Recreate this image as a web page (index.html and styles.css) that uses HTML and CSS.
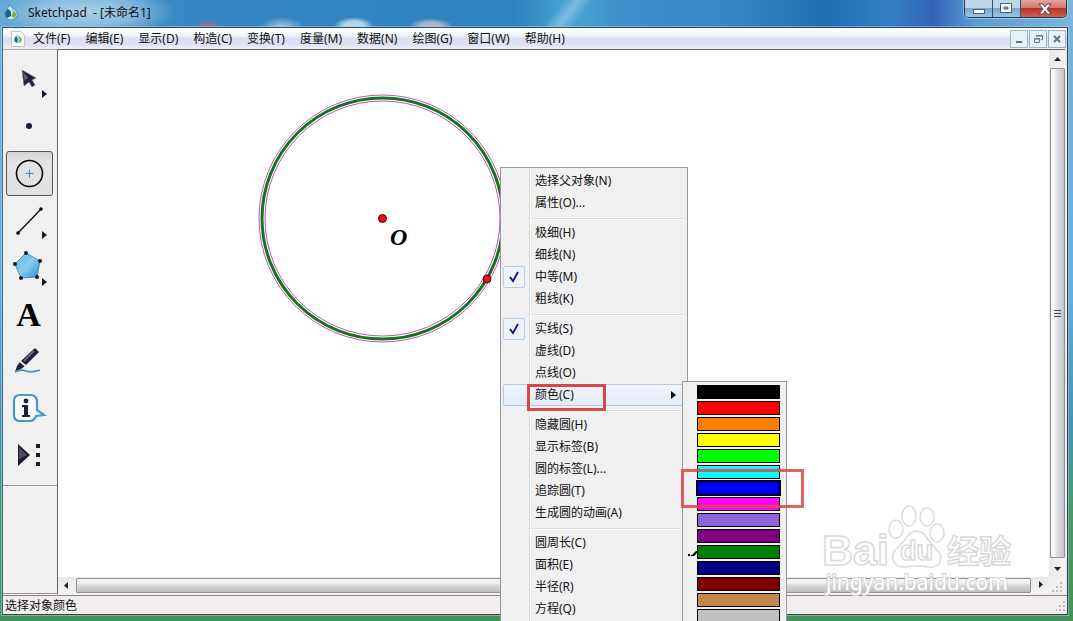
FILE: index.html
```html
<!DOCTYPE html>
<html lang="zh-CN">
<head>
<meta charset="utf-8">
<meta name="viewport" content="width=device-width, initial-scale=1">
<title>Sketchpad - [未命名1]</title>
<link rel="stylesheet" href="styles.css">
</head>
<body>
<div class="window">
  <header class="titlebar">
    <svg class="app-icon" width="16" height="18" viewBox="0 0 16 18" aria-hidden="true">
      <path d="M5 1L11 6Q15 9 12 14Q7 18 2 14Q-1 10 3 6Z" fill="#c6e8f3" stroke="#4d91ab"/>
      <path d="M4 5Q8 7 7 12L3 14Q-1 10 4 5Z" fill="#176687"/>
      <path d="M7 5L12 9Q13 12 10 14L7 12Q11 9 7 5Z" fill="#78b43c"/>
    </svg>
    <h1 class="title">Sketchpad &nbsp;- [未命名1]</h1>
    <div class="caption-buttons">
      <button class="caption" aria-label="最小化"><svg width="27" height="16" viewBox="0 0 27 16"><rect x="8.500" y="8.500" width="11" height="4" fill="#fff" stroke="#47607a"/></svg></button>
      <button class="caption" aria-label="最大化"><svg width="27" height="16" viewBox="0 0 27 16"><path d="M7.500 2.500h11v9h-11zM11 6v2h4V6z" fill="#fff" fill-rule="evenodd" stroke="#47607a"/></svg></button>
      <button class="caption caption-close" aria-label="关闭"><svg width="45" height="16" viewBox="0 0 45 16"><path d="M18 3h4l2 3 2-3h4l-4 5 4 5h-4l-2-3-2 3h-4l4-5z" fill="#fff" stroke="#5b4650"/></svg></button>
    </div>
  </header>

  <div class="frame">
    <nav class="menubar">
      <svg class="doc-icon" width="14" height="16" viewBox="0 0 14 16" aria-hidden="true">
        <path d="M.5.5h9l4 4v11H.5z" fill="#fff" stroke="#bcc5d3"/>
        <path d="M6 3Q11 6 11 9Q10 13 6 12Q2 11 3 8Z" fill="#b5ddeb"/>
        <path d="M5 5Q8 8 6 12Q1 10 5 5Z" fill="#1b6f88"/>
        <path d="M8 5Q13 9 8 12Q9 9 8 5Z" fill="#6da53c"/>
      </svg>
      <button>文件(F)</button><button>编辑(E)</button><button>显示(D)</button><button>构造(C)</button><button>变换(T)</button><button>度量(M)</button><button>数据(N)</button><button>绘图(G)</button><button>窗口(W)</button><button>帮助(H)</button>
      <div class="doc-buttons">
        <button aria-label="最小化文档"><svg width="16" height="16" viewBox="0 0 16 16"><path d="M5 11h6" stroke="#60758b" stroke-width="2"/></svg></button>
        <button aria-label="还原文档"><svg width="16" height="16" viewBox="0 0 16 16"><path d="M6.500 6V4.500h6v4H11M6 5h7M4.500 7.500h5v4h-5zM4 8h6" fill="none" stroke="#60758b"/></svg></button>
        <button aria-label="关闭文档"><svg width="16" height="16" viewBox="0 0 16 16"><path d="M5 5l6 6M11 5l-6 6" stroke="#60758b" stroke-width="2"/></svg></button>
      </div>
    </nav>

    <div class="workspace">
      <aside class="toolbar">
        <button class="tool" aria-label="移动箭头工具"><svg width="46" height="44" viewBox="1 1 46 44"><path d="M16 13L30 21L26 23L29 28L26 30L23 25L18 29Z" fill="#21203a" stroke="#777" stroke-width=".6"/><path d="M17 15l2 9 2-3 2 1z" fill="#65657c"/><path d="M36 33v8l5-4z" fill="#1b1930"/></svg></button>
        <button class="tool" aria-label="点工具"><svg width="46" height="44" viewBox="1 1 46 44"><circle cx="23" cy="22" r="3" fill="#1d1b35"/></svg></button>
        <button class="tool tool-active" aria-label="圆工具"><svg width="46" height="44" viewBox="1 0 46 44"><circle cx="23.500" cy="21.500" r="13" fill="none" stroke="#080808" stroke-width="1.600"/><path d="M23.500 17.500v8M19.500 21.500h8" stroke="#3c8fc4"/></svg></button>
        <button class="tool" aria-label="线段工具"><svg width="46" height="44" viewBox="1 1 46 44"><path d="M12 35L35 11" stroke="#1b1930" stroke-width="1.500"/><circle cx="12" cy="35" r="1.800"/><circle cx="35" cy="11" r="1.800"/><path d="M36 33v8l5-4z" fill="#1b1930"/></svg></button>
        <button class="tool" aria-label="多边形工具"><svg width="46" height="44" viewBox="1 1 46 44"><defs><linearGradient id="poly" x2="1" y2="1"><stop stop-color="#67b3df"/><stop offset=".5" stop-color="#8acbed"/><stop offset="1" stop-color="#2c91cc"/></linearGradient></defs><path d="M20 8L34 16L31 32L15 33L9 19Z" fill="url(#poly)" stroke="#3e91c1"/><g fill="#1b1930"><circle cx="20" cy="8" r="2"/><circle cx="34" cy="16" r="2"/><circle cx="31" cy="32" r="2"/><circle cx="15" cy="33" r="2"/><circle cx="9" cy="19" r="2"/><path d="M36 33v8l5-4z"/></g></svg></button>
        <button class="tool tool-text" aria-label="文本工具">A</button>
        <button class="tool" aria-label="标记工具"><svg width="46" height="44" viewBox="1 1 46 44"><path d="M29 9l4 4-13 13-5-4z" fill="#242239"/><path d="M28 12L18 22" stroke="#777587" stroke-width="1.500"/><path d="M14 23l5 4-4 3-6 3 2-6z" fill="#211f35"/><path d="M13 22l7 6" stroke="#eee"/><path d="M9 33Q15 30 20 32T34 31" fill="none" stroke="#4595c4" stroke-width="1.800"/></svg></button>
        <button class="tool" aria-label="信息工具"><svg width="46" height="44" viewBox="1 1 46 44"><path d="M14 9H24Q31 9 31 16V24L38 29L30 30Q28 35 24 35H14Q8 35 8 29V15Q8 9 14 9Z" fill="#f7fbfd" stroke="#4798c4" stroke-width="2.200"/><circle cx="20" cy="15" r="2.400" fill="#211e37"/><path d="M16 19h6v10h2v2h-8v-2h2v-8h-2z" fill="#211e37"/></svg></button>
        <button class="tool" aria-label="自定义工具"><svg width="46" height="44" viewBox="1 1 46 44"><path d="M12 11L24 22L12 33Z" fill="#1c1930"/><path d="M13 14l8 8-8 4z" fill="#4c495b"/><path d="M30 11h4v4h-4zM30 20h4v4h-4zM30 29h4v4h-4z" fill="#1c1930"/></svg></button>
        <hr>
      </aside>

      <main class="document">
        <svg class="sketch" role="img" aria-label="圆 O">
          <g fill="none">
            <circle cx="324.500" cy="168.500" r="120.500" stroke="#13761d" stroke-width="3"/>
            <circle cx="324.500" cy="168.500" r="123.500" stroke="#c64fc4"/>
            <circle cx="324.500" cy="168.500" r="117.500" stroke="#c64fc4"/>
          </g>
          <g fill="#e51220" stroke="#4b0909">
            <circle cx="324.500" cy="168.500" r="4"/>
            <circle cx="429" cy="229" r="4"/>
          </g>
          <text class="point-label" x="332" y="195">O</text>
        </svg>
        <div class="scroll scroll-y">
          <svg class="arrow" width="15" height="18" viewBox="0 0 15 18"><path d="M4 11h7L7.500 7z"/></svg>
          <div class="thumb"><svg width="7" height="9" viewBox="0 0 7 9"><path d="M0 1.500h7M0 4.500h7M0 7.500h7" stroke="#45494f"/></svg></div>
          <svg class="arrow" width="15" height="19" viewBox="0 0 15 19"><path d="M4 9h7l-3.500 4z"/></svg>
        </div>
        <div class="scroll scroll-x">
          <svg class="arrow" width="18" height="16" viewBox="0 0 18 16"><path d="M10 5v7L6 8.500z"/></svg>
          <div class="thumb"></div>
          <svg class="arrow" width="18" height="16" viewBox="0 0 18 16"><path d="M8 4v7l4-3.500z"/></svg>
        </div>
        <svg class="grip" width="15" height="16" viewBox="0 0 15 16"><path d="M11 5h2v2h-2zM7 9h2v2h-2zM11 9h2v2h-2zM3 13h2v2H3zM7 13h2v2H7zM11 13h2v2h-2z"/></svg>
      </main>
    </div>

    <footer class="status"><span>选择对象颜色</span>
      <svg class="grip" width="11" height="12" viewBox="4 4 11 12"><path d="M11 5h2v2h-2zM7 9h2v2h-2zM11 9h2v2h-2zM4 13h1v2H4zM7 13h2v2H7zM11 13h2v2h-2z"/></svg>
    </footer>
  </div>

  <svg class="watermark" width="200" height="100" viewBox="0 0 200 100" aria-label="Baidu 经验">
    <g fill="#fff" stroke="#dadada" stroke-width="1.500">
      <ellipse cx="74" cy="29" rx="7" ry="9"/><ellipse cx="87" cy="16" rx="7" ry="10"/><ellipse cx="105" cy="17" rx="7" ry="9"/><ellipse cx="115" cy="33" rx="7" ry="9"/>
      <path d="M94 31Q101 31 105 38Q109 44 114 49Q121 55 118 62Q115 68 107 67Q94 65 84 67Q74 68 71 60Q69 53 76 47Q81 43 85 37Q89 31 94 31Z"/>
      <text class="wm-brand" x="0" y="65">Bai</text>
      <text class="wm-du" x="78" y="60">du</text>
      <text class="wm-cjk" x="125" y="63">经验</text>
    </g>
    <text class="wm-url" x="4" y="90">jingyan.baidu.com</text>
  </svg>

  <div class="menu" role="menu">
    <button role="menuitem">选择父对象(N)</button>
    <button role="menuitem">属性(O)...</button>
    <hr>
    <button role="menuitem">极细(H)</button>
    <button role="menuitem">细线(N)</button>
    <button role="menuitemcheckbox" aria-checked="true"><svg class="check" width="20" height="20" viewBox="0 0 20 20"><path d="M6 10l3 4 5-9" fill="none" stroke="#12127c" stroke-width="1.800"/></svg>中等(M)</button>
    <button role="menuitem">粗线(K)</button>
    <hr>
    <button role="menuitemcheckbox" aria-checked="true"><svg class="check" width="20" height="20" viewBox="0 0 20 20"><path d="M6 10l3 4 5-9" fill="none" stroke="#12127c" stroke-width="1.800"/></svg>实线(S)</button>
    <button role="menuitem">虚线(D)</button>
    <button role="menuitem">点线(O)</button>
    <div class="submenu-owner">
      <button class="hot" role="menuitem" aria-haspopup="true">颜色(C)<svg class="more" width="5" height="8" viewBox="0 0 5 8"><path d="M0 0v8l5-4z"/></svg></button>
      <div class="mark mark-item"></div>
      <div class="submenu" role="menu">
        <button class="swatch black" aria-label="黑色"></button>
        <button class="swatch red" aria-label="红色"></button>
        <button class="swatch orange" aria-label="橙色"></button>
        <button class="swatch yellow" aria-label="黄色"></button>
        <button class="swatch lime" aria-label="亮绿"></button>
        <button class="swatch cyan" aria-label="青色"></button>
        <button class="swatch blue" aria-label="蓝色"></button>
        <button class="swatch magenta" aria-label="品红"></button>
        <button class="swatch violet" aria-label="淡紫"></button>
        <button class="swatch purple" aria-label="紫色"></button>
        <button class="swatch green" aria-label="绿色"><svg class="tick" width="9" height="6" viewBox="0 0 9 6"><path d="M0 3h2v2H0zM3 4h2v1H3zM4 4l4-4h1v2L6 5H4z"/></svg></button>
        <button class="swatch navy" aria-label="深蓝"></button>
        <button class="swatch maroon" aria-label="深红"></button>
        <button class="swatch tan" aria-label="棕色"></button>
        <button class="swatch silver" aria-label="银色"></button>
        <div class="mark mark-swatch"></div>
      </div>
    </div>
    <hr>
    <button role="menuitem">隐藏圆(H)</button>
    <button role="menuitem">显示标签(B)</button>
    <button role="menuitem">圆的标签(L)...</button>
    <button role="menuitem">追踪圆(T)</button>
    <button role="menuitem">生成圆的动画(A)</button>
    <hr>
    <button role="menuitem">圆周长(C)</button>
    <button role="menuitem">面积(E)</button>
    <button role="menuitem">半径(R)</button>
    <button role="menuitem">方程(Q)</button>
  </div>
</div>
</body>
</html>
```
FILE: styles.css
```css
* { box-sizing: border-box; }
body {
  margin: 0;
  font: 12px/20px "Noto Sans", "Noto Sans CJK SC", sans-serif;
  color: #111;
}
button {
  margin: 0;
  padding: 0;
  border: 0;
  background: none;
  font: inherit;
  color: inherit;
}
svg { display: block; flex: none; }

.window {
  position: relative;
  display: flex;
  flex-direction: column;
  height: 100vh;
  padding: 0 5px 6px 2px;
  overflow: hidden;
  background: linear-gradient(#79b2da 0, #68b0dc 45%, #4693b5 68%, #4a9a68 82%, #459257 100%);
}

.titlebar {
  display: flex;
  align-items: flex-start;
  flex: none;
  height: 27px;
  margin: 0 -5px 0 -2px;
  padding: 0 6px 0 4px;
  background:
    radial-gradient(ellipse 90px 26px at 85px 12px, #b4d5eaee 0, #9bc7e3bb 55%, #9bc7e300 100%),
    radial-gradient(ellipse 16px 8px at 208px 27px, #a56f83 0, #a56f8300 100%),
    radial-gradient(ellipse 22px 10px at 282px 27px, #a9c4df 0, #a9c4df00 100%),
    radial-gradient(ellipse 20px 9px at 354px 26px, #b3d5ee 0 50%, #b3d5ee00 100%),
    radial-gradient(ellipse 22px 9px at 431px 27px, #a8b6ce 0 50%, #a8b6ce00 100%),
    linear-gradient(128deg, transparent 0 444px, #7dbbe3 456px, transparent 468px),
    linear-gradient(90deg, #62a8d5 0, #3487c4 18%, #2e82bf 48%, #49a5d1 53%, #3e8fcc 58%, #3687c4 68%, #1e70b2 77%, #347fc3 83%, #3465b8 87%, #5a9dd4 91%, #7cb5db 100%);
}
.app-icon { margin-top: 4px; }
.title {
  flex: 1;
  margin: 3px 0 0 8px;
  font-size: 12px;
  font-weight: 400;
  line-height: 20px;
}
.caption-buttons {
  display: flex;
  height: 18px;
  border: 1px solid #24384f;
  border-top: 0;
  border-radius: 0 0 5px 5px;
  box-shadow: 0 0 0 1px #b9d8ecaa;
  overflow: hidden;
}
.caption {
  border-right: 1px solid #31506e;
  background: linear-gradient(#bcd6ea 0 45%, #7ba8cb 50%, #9cc7e2);
}
.caption-close {
  border-right: 0;
  background: linear-gradient(#e0a79e 0, #d27a6b 45%, #b53425 50%, #cf6253);
}

.frame {
  display: flex;
  flex: 1;
  flex-direction: column;
  min-height: 0;
  border: 1px solid #2c4c63;
  border-color: #2c4c63 #26455a #294d40 #426b83;
  background: #efedec;
  box-shadow: 0 0 0 1px #a9d3e688;
}

.menubar {
  display: flex;
  align-items: center;
  gap: 15px;
  flex: none;
  height: 21px;
  padding: 0 1px 0 8px;
  background: linear-gradient(#fff 0, #f1f4fa 35%, #d9def0 50%, #dfe2f3 80%, #f1f1f7 100%);
  white-space: nowrap;
}
.doc-icon { margin-right: -7px; }
.doc-buttons { display: flex; gap: 1px; margin-left: auto; }
.doc-buttons button { border: 1px solid #98b4cb; background: #e8f1fa; }

.workspace { display: flex; flex: 1; min-height: 0; }
.toolbar {
  flex: none;
  width: 55px;
  padding: 7px 3px 0;
  border-top: 1px solid #aaa;
  border-bottom: 1px solid #999;
  background: #f0f0f0;
}
.tool {
  display: grid;
  place-items: center;
  width: 47px;
  height: 45px;
  margin-bottom: 2px;
  border: 1px solid transparent;
  border-radius: 3px;
}
.tool-active {
  border-color: #555;
  background: linear-gradient(#d2d2d2, #e4e4e4 25%, #e0e0e0);
}
.tool-text { padding-right: 2px; font: bold 34px/44px "Liberation Serif", serif; color: #000; }
.toolbar hr {
  margin: 7px -3px 0;
  border: 0;
  border-top: 1px solid #999;
  border-bottom: 1px solid #fff;
}

.document {
  display: grid;
  grid-template: 1fr 17px / 1fr 16px;
  flex: 1;
  min-width: 0;
  margin-right: 2px;
  margin-left: -1px;
  border-top: 1px solid #666;
  border-left: 1px solid #666;
  background: #f0f0f0;
}
.sketch { width: 100%; height: 100%; background: #fff; }
.point-label { font: italic bold 24px "Liberation Serif", serif; fill: #000; }
.scroll { display: flex; }
.scroll-y { flex-direction: column; padding-left: 1px; background: linear-gradient(90deg, #e8e8e8, #f4f4f4); }
.scroll-x { background: linear-gradient(#e8e8e8, #f4f4f4); }
.arrow { fill: #222; }
.thumb {
  display: grid;
  place-items: center;
  flex: 1;
  border: 1px solid #8f9196;
  border-radius: 1px;
}
.scroll-y .thumb { background: linear-gradient(90deg, #f7f7f7 0 25%, #dedfe3 48%, #c2c3ca); }
.scroll-x .thumb { margin: 1px 0; background: linear-gradient(#f3f3f3 0 30%, #d8d8d8 50%, #bdbdbd); }
.grip { fill: #bdbdbd; }

.status {
  display: flex;
  align-items: center;
  justify-content: space-between;
  flex: none;
  height: 19px;
  margin-top: 1px;
  padding: 2px 0 0 2px;
  border-top: 1px solid #888;
  background: #f0edec;
}

.menu {
  position: absolute;
  top: 167px;
  left: 500px;
  width: 188px;
  height: 500px;
  padding: 2px;
  border: 1px solid #979797;
  background: linear-gradient(90deg, transparent 28px, #dedede 28px 29px, #fff 29px 30px, transparent 30px), #f0f0f0;
}
.menu > button, .hot {
  position: relative;
  display: block;
  width: 100%;
  height: 22px;
  padding-left: 32px;
  text-align: left;
  line-height: 22px;
  white-space: nowrap;
}
.menu hr {
  margin: 4px 0 2px 27px;
  border: 0;
  border-top: 1px solid #dedede;
  border-bottom: 1px solid #fff;
}
.check {
  position: absolute;
  top: 0;
  left: 0;
  box-sizing: content-box;
  border: 1px solid #b3cdea;
  border-radius: 2px;
  background: #edf2fa;
}
.submenu-owner { position: relative; }
.menu .hot {
  border: 1px solid #afcbea;
  border-radius: 2px;
  padding-left: 31px;
  line-height: 20px;
  background: linear-gradient(#f0f4fa, #e3ebf5);
}
.more { position: absolute; top: 6px; right: 8px; }
.submenu {
  position: absolute;
  top: -3px;
  left: 179px;
  display: flex;
  flex-direction: column;
  gap: 2px;
  width: 105px;
  height: 300px;
  padding: 3px 6px 3px 14px;
  border: 1px solid #979797;
  background: #f0f0f0;
}
.swatch { position: relative; flex: none; height: 14px; border: 1px solid #000; }
.black { background: #000; }
.red { background: #f00; }
.orange { background: #ff8000; }
.yellow { background: #ff0; }
.lime { background: #0f0; }
.cyan { background: #0ff; }
.blue { border: 2px solid #00007c; background: #00f; box-shadow: 0 0 0 1px #000; }
.magenta { background: #f0f; }
.violet { background: #8c64d7; }
.purple { background: #800080; }
.green { background: #008000; }
.navy { background: #000080; }
.maroon { background: #800000; }
.tan { background: #c4864b; }
.silver { background: #c0c0c0; }
.tick { position: absolute; top: 5px; left: -10px; }

.mark { position: absolute; border: 3px solid #d94848; pointer-events: none; }
.mark-item { top: 0; left: 24px; width: 79px; height: 27px; }
.mark-swatch { top: 87px; left: -2px; width: 123px; height: 39px; border-color: #e14848dd; }

.watermark { position: absolute; right: 51px; bottom: 21px; }
.wm-brand { font: bold 43px "Liberation Sans", sans-serif; }
.wm-du { font: bold 27px "Liberation Sans", sans-serif; }
.wm-cjk { font: bold 32px "Noto Sans CJK SC", sans-serif; }
.wm-url {
  font: 21px "Noto Sans", sans-serif;
  fill: #fff;
  stroke: #cfcfcf;
  stroke-width: 2px;
  paint-order: stroke;
}
```
